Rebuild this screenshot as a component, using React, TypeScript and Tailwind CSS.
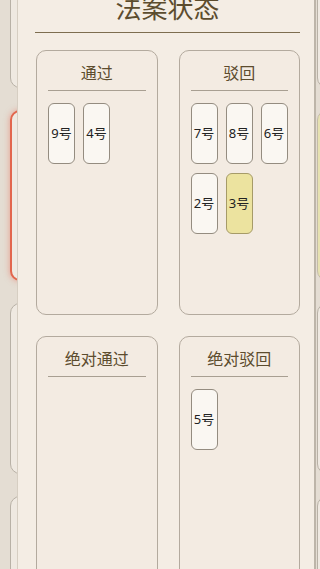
import React from "react";

type Bill = { id: number; highlight?: boolean };

const groups: { title: string; bills: Bill[] }[] = [
  { title: "通过", bills: [{ id: 9 }, { id: 4 }] },
  { title: "驳回", bills: [{ id: 7 }, { id: 8 }, { id: 6 }, { id: 2 }, { id: 3, highlight: true }] },
  { title: "绝对通过", bills: [] },
  { title: "绝对驳回", bills: [{ id: 5 }] },
];

// background seat cards behind the dialog
const rows = [
  { left: "normal", right: "normal" },
  { left: "red", right: "yellow" },
  { left: "normal", right: "normal" },
  { left: "normal", right: "normal" },
];

function BgCard({ kind }: { kind: string }) {
  if (kind === "red") {
    return (
      <div className="h-[171px] w-[300px] shrink-0 rounded-[10px] border-2 border-[#e2664d] bg-[#efe9e1] shadow-[0_0_6px_rgba(230,100,80,0.55)]" />
    );
  }
  if (kind === "yellow") {
    return <div className="h-[171px] w-[200px] shrink-0 rounded-[10px] border border-[#c4bca8] bg-[#e7e2b1]" />;
  }
  return <div className="h-[171px] w-[300px] shrink-0 rounded-[10px] border border-[#b8b1a6] bg-[#efe9e1]" />;
}

function BillCard({ bill }: { bill: Bill }) {
  return (
    <div
      className={`flex h-[61px] w-[27px] items-center justify-center rounded-[6px] border text-[13px] text-[#222] ${
        bill.highlight ? "border-[#a69b68] bg-[#ece39f]" : "border-[#948c80] bg-[#faf7f2]"
      }`}
    >
      {bill.id}号
    </div>
  );
}

export default function App() {
  return (
    <div
      className="relative h-[569px] w-[320px] overflow-hidden bg-[#e4ddd3]"
      style={{ fontFamily: '"Noto Sans", "Noto Sans CJK SC", sans-serif' }}
    >
      {/* seat list behind */}
      <div className="-mt-[83px] flex flex-col gap-[22px]">
        {rows.map((r, i) => (
          <div key={i} className="flex gap-[7px] pl-[10px]">
            <BgCard kind={r.left} />
            <BgCard kind={r.right} />
          </div>
        ))}
      </div>

      {/* dialog */}
      <div className="absolute left-[17px] top-0 flex h-full w-[299px] flex-col border-l border-r-2 border-l-[#d6cec2] border-r-[#bdb5a9] bg-[#f4ede4] pl-[17px] pr-[14px]">
        <div className="-mt-[5px] border-b-[1.5px] border-[#7d6d4f] pb-[11px] text-center text-[26px] leading-none text-[#5c4c2e]">
          法案状态
        </div>

        <div className="mt-[17px] grid grid-cols-2 gap-x-[21px] gap-y-[21px] pl-[1px]">
          {groups.map((g) => (
            <div key={g.title} className="h-[265px] rounded-[10px] border-[1.5px] border-[#b3aa9e] bg-[#f3ebe2] px-[11px]">
              <div className="flex h-[40px] items-end justify-center border-b border-[#a89f92] pb-[9px] text-[16px] leading-none text-[#5c4c2e]">
                {g.title}
              </div>
              <div className="mt-[12px] grid grid-cols-[27px_27px_27px] gap-x-[8px] gap-y-[9px]">
                {g.bills.map((b) => (
                  <BillCard key={b.id} bill={b} />
                ))}
              </div>
            </div>
          ))}
        </div>
      </div>
    </div>
  );
}
